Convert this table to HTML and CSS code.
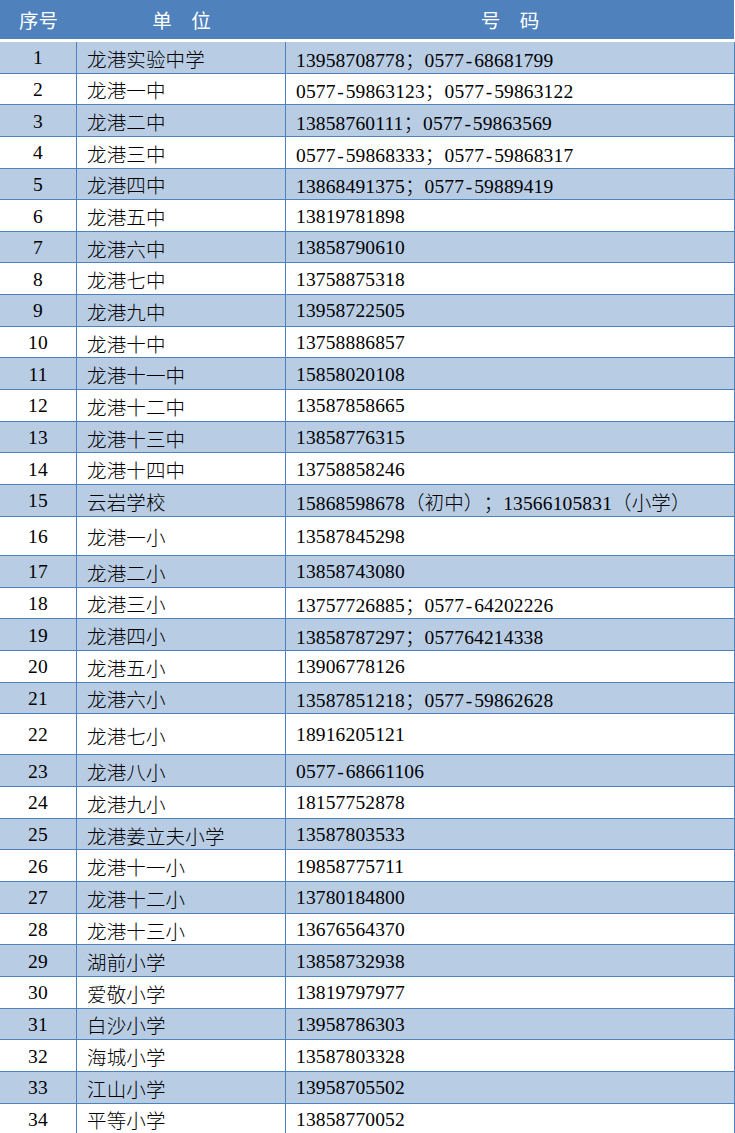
FILE: index.html
```html
<!DOCTYPE html>
<html lang="zh-CN">
<head>
<meta charset="utf-8">
<title>联系电话</title>
<link rel="stylesheet" href="styles.css">
</head>
<body>
<div class="table">
  <div class="head">
    <div class="hc">序号</div>
    <div class="hc">单　位</div>
    <div class="hc last">号　码</div>
  </div>
  <div class="row band"><div class="c n">1</div><div class="c">龙港实验中学</div><div class="c"><span>13958708778；0577<span class="hy">-</span>68681799</span></div></div>
  <div class="row"><div class="c n">2</div><div class="c">龙港一中</div><div class="c"><span>0577<span class="hy">-</span>59863123；0577<span class="hy">-</span>59863122</span></div></div>
  <div class="row band"><div class="c n">3</div><div class="c">龙港二中</div><div class="c"><span>13858760111；0577<span class="hy">-</span>59863569</span></div></div>
  <div class="row"><div class="c n">4</div><div class="c">龙港三中</div><div class="c"><span>0577<span class="hy">-</span>59868333；0577<span class="hy">-</span>59868317</span></div></div>
  <div class="row band"><div class="c n">5</div><div class="c">龙港四中</div><div class="c"><span>13868491375；0577<span class="hy">-</span>59889419</span></div></div>
  <div class="row"><div class="c n">6</div><div class="c">龙港五中</div><div class="c">13819781898</div></div>
  <div class="row band"><div class="c n">7</div><div class="c">龙港六中</div><div class="c">13858790610</div></div>
  <div class="row"><div class="c n">8</div><div class="c">龙港七中</div><div class="c">13758875318</div></div>
  <div class="row band"><div class="c n">9</div><div class="c">龙港九中</div><div class="c">13958722505</div></div>
  <div class="row"><div class="c n">10</div><div class="c">龙港十中</div><div class="c">13758886857</div></div>
  <div class="row band"><div class="c n">11</div><div class="c">龙港十一中</div><div class="c">15858020108</div></div>
  <div class="row"><div class="c n">12</div><div class="c">龙港十二中</div><div class="c">13587858665</div></div>
  <div class="row band"><div class="c n">13</div><div class="c">龙港十三中</div><div class="c">13858776315</div></div>
  <div class="row"><div class="c n">14</div><div class="c">龙港十四中</div><div class="c">13758858246</div></div>
  <div class="row band r15"><div class="c n">15</div><div class="c">云岩学校</div><div class="c">15868598678（初中）；13566105831（小学）</div></div>
  <div class="row tall"><div class="c n">16</div><div class="c">龙港一小</div><div class="c">13587845298</div></div>
  <div class="row band"><div class="c n">17</div><div class="c">龙港二小</div><div class="c">13858743080</div></div>
  <div class="row"><div class="c n">18</div><div class="c">龙港三小</div><div class="c"><span>13757726885；0577<span class="hy">-</span>64202226</span></div></div>
  <div class="row band"><div class="c n">19</div><div class="c">龙港四小</div><div class="c">13858787297；057764214338</div></div>
  <div class="row"><div class="c n">20</div><div class="c">龙港五小</div><div class="c">13906778126</div></div>
  <div class="row band"><div class="c n">21</div><div class="c">龙港六小</div><div class="c"><span>13587851218；0577<span class="hy">-</span>59862628</span></div></div>
  <div class="row taller"><div class="c n">22</div><div class="c">龙港七小</div><div class="c">18916205121</div></div>
  <div class="row band"><div class="c n">23</div><div class="c">龙港八小</div><div class="c"><span>0577<span class="hy">-</span>68661106</span></div></div>
  <div class="row"><div class="c n">24</div><div class="c">龙港九小</div><div class="c">18157752878</div></div>
  <div class="row band"><div class="c n">25</div><div class="c">龙港姜立夫小学</div><div class="c">13587803533</div></div>
  <div class="row"><div class="c n">26</div><div class="c">龙港十一小</div><div class="c">19858775711</div></div>
  <div class="row band"><div class="c n">27</div><div class="c">龙港十二小</div><div class="c">13780184800</div></div>
  <div class="row"><div class="c n">28</div><div class="c">龙港十三小</div><div class="c">13676564370</div></div>
  <div class="row band"><div class="c n">29</div><div class="c">湖前小学</div><div class="c">13858732938</div></div>
  <div class="row"><div class="c n">30</div><div class="c">爱敬小学</div><div class="c">13819797977</div></div>
  <div class="row band"><div class="c n">31</div><div class="c">白沙小学</div><div class="c">13958786303</div></div>
  <div class="row"><div class="c n">32</div><div class="c">海城小学</div><div class="c">13587803328</div></div>
  <div class="row band"><div class="c n">33</div><div class="c">江山小学</div><div class="c">13958705502</div></div>
  <div class="row"><div class="c n">34</div><div class="c">平等小学</div><div class="c">13858770052</div></div>
</div>
</body>
</html>
```

FILE: styles.css
```css
html, body {
  margin: 0;
  padding: 0;
  background: #ffffff;
}

.table {
  width: 735px;
  font-family: "Liberation Serif", "Noto Sans CJK SC", serif;
  font-size: 19.5px;
  font-weight: 300;
  color: #000;
  text-spacing-trim: space-all;
}

.head {
  display: grid;
  grid-template-columns: 77px 209px 449px;
  height: 42px;
  box-sizing: border-box;
  background: #4f81bd;
  border-bottom: 3px solid #ffffff;
}

.hc {
  display: flex;
  align-items: center;
  justify-content: center;
  color: #ffffff;
  font-family: "Noto Sans CJK SC", sans-serif;
  font-size: 19.5px;
  font-weight: 400;
  padding-bottom: 1px;
}

.hc.last {
  border-right: 1px solid #ffffff;
}

.row {
  display: grid;
  grid-template-columns: 77px 209px 449px;
  height: 31.65px;
  box-sizing: border-box;
  border-bottom: 1px solid #4f81bd;
  background: #ffffff;
}

.row.band {
  background: #b8cce4;
}

.row.r15 {
  height: 32px;
}

.row.tall {
  height: 39px;
}

.row.taller {
  height: 41.3px;
}

.c {
  display: flex;
  align-items: center;
  padding: 2px 0 0 10px;
  border-right: 1px solid #4f81bd;
  white-space: pre;
  overflow: hidden;
  letter-spacing: 0.15px;
}

.c.n {
  justify-content: center;
  padding-left: 0;
}

.hy {
  padding: 0 1.7px;
}
```
